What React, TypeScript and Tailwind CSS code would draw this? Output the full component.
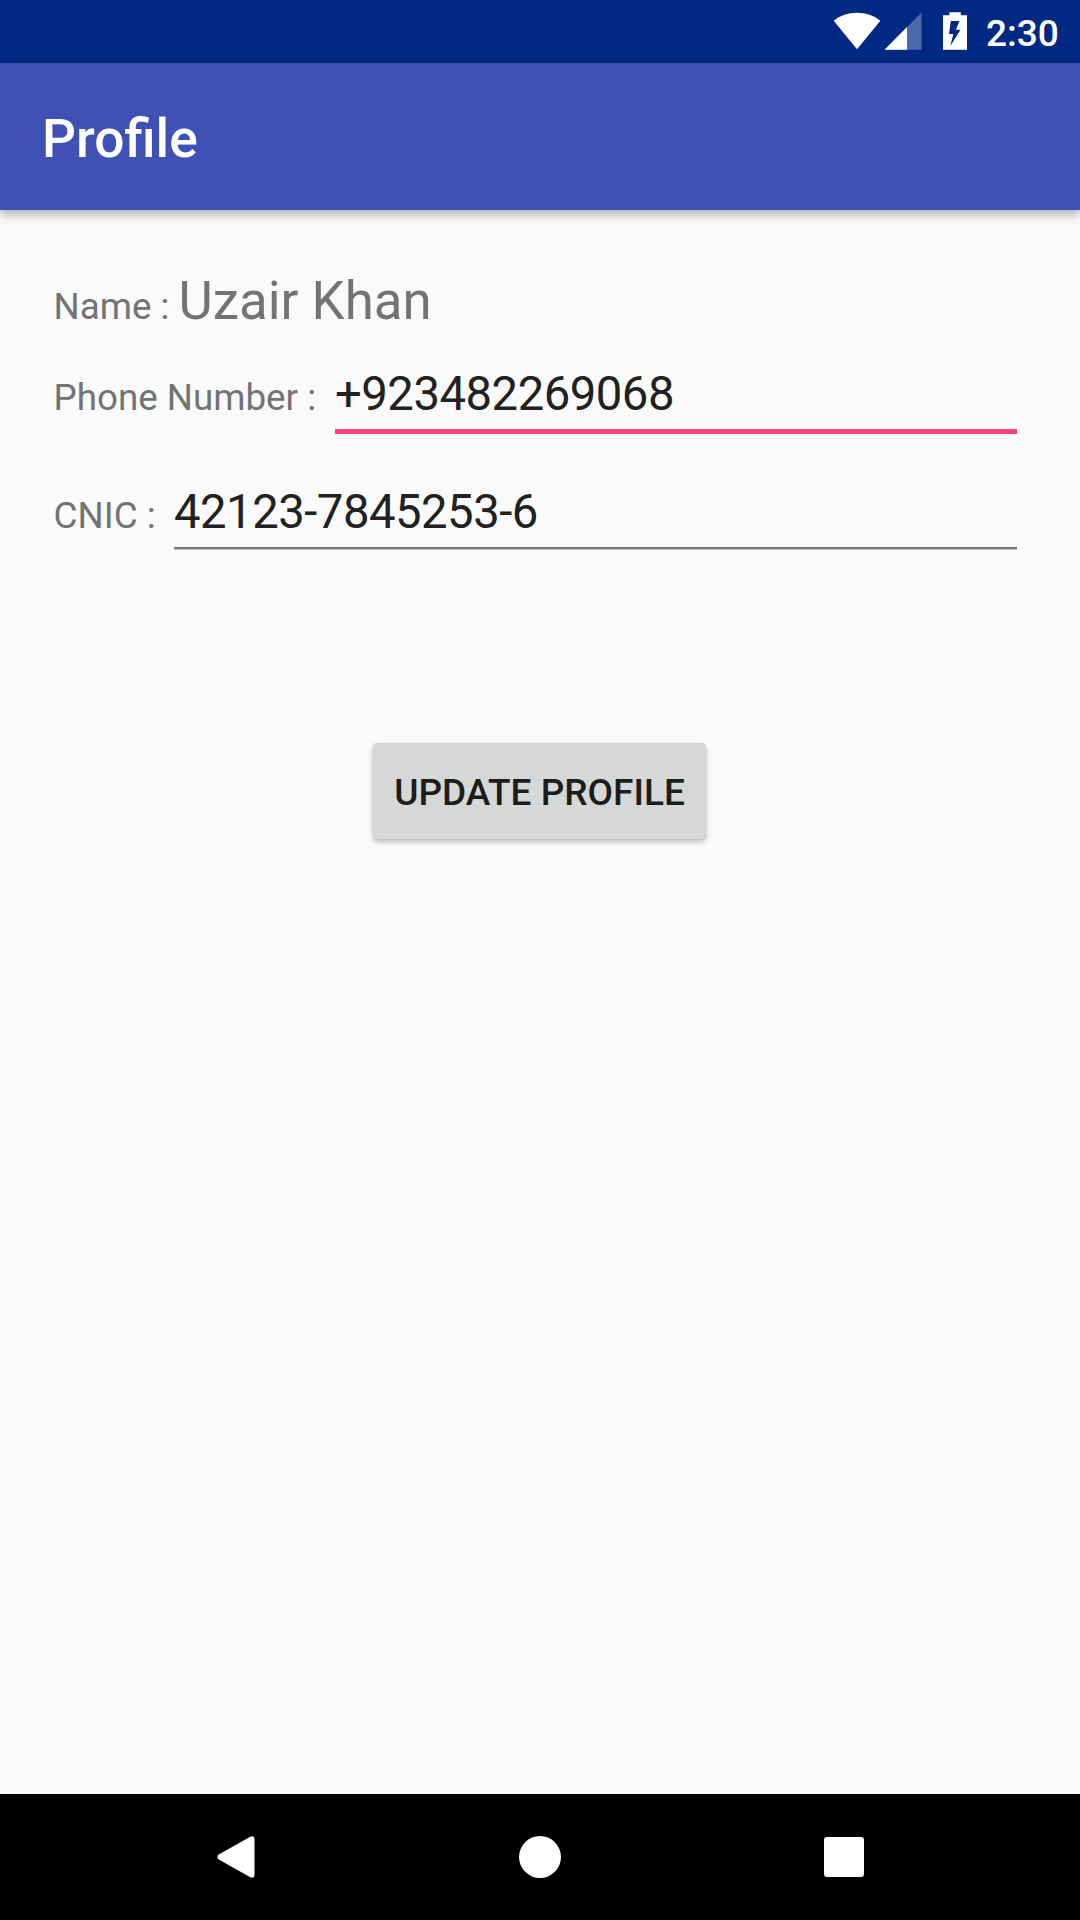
function StatusBar() {
  return (
    <div className="flex h-[63px] items-start bg-[#002984] pl-[833px] text-white">
      <svg width="150" height="63" viewBox="833 0 150 63" className="shrink-0" fill="currentColor">
        <path d="M833.7 20.7C840 15.600 848 12.700 857 12.700S874 15.600 880.3 20.700L857 49.300Z" />
        <path d="M921.500 12.600V49.700H884.500Z" opacity=".3" />
        <path d="M907 27.100V49.700H884.500Z" />
        <path
          fillRule="evenodd"
          d="M949.300 12.300H960.800V15.300H967V49.700H943V15.300H949.300ZM950.800 20.900L949 34H953.400L950.300 46L960.500 29.700H956L959.400 20.900Z"
        />
      </svg>
      <span className="mt-[15px] ml-[3px] text-[37px] leading-[37px] font-medium">2:30</span>
    </div>
  );
}

function NavigationBar() {
  return (
    <nav className="flex h-[126px] items-center bg-black pl-[217px] text-white">
      <button aria-label="Back" className="mr-[264px] shrink-0">
        <svg width="38" height="42" viewBox="0 0 38 42" className="block" fill="currentColor">
          <path d="M1.300 18.800L33.300.8Q37.500-.8 37.500 3V39Q37.500 42.800 33.300 41.200L1.300 23.200Q-.4 21 1.300 18.800Z" />
        </svg>
      </button>
      <button aria-label="Home" className="size-[42px] shrink-0 rounded-full bg-white" />
      <button aria-label="Recents" className="ml-[263px] size-10 shrink-0 rounded-[3px] bg-white" />
    </nav>
  );
}

export default function App() {
  return (
    <div className="flex h-[1920px] w-[1080px] flex-col overflow-hidden bg-[#fafafa] font-['Roboto',sans-serif] text-[36.750px] leading-[37px] text-[#737373]">
      <StatusBar />
      <header className="flex h-[147px] items-center bg-[#3f51b5] pt-[4px] pl-[42px] text-white shadow-[0_4px_10px_rgba(0,0,0,0.32)]">
        <h1 className="text-[53.300px] leading-[62px] font-medium">Profile</h1>
      </header>
      <main className="flex flex-1 flex-col pr-[63px] pl-[53.500px] whitespace-pre">
        <div className="mt-[65px] flex h-[81px] items-baseline">
          <span>Name : </span>
          <span className="text-[52.800px] leading-[53px]">Uzair Khan</span>
        </div>
        <div className="flex h-[79px] items-baseline">
          <span className="w-[281.500px] shrink-0">Phone Number : </span>
          <span className="h-[78px] flex-1 border-b-[5px] border-[#ff4081] pt-[15px] text-[47.250px] leading-[47px] tracking-[-0.5px] text-[#212121]">
            +923482269068
          </span>
        </div>
        <div className="mt-[39px] flex h-[79px] items-baseline">
          <span className="w-[120.500px] shrink-0">CNIC : </span>
          <span className="h-[75px] flex-1 border-b-2 border-[#737373] pt-[15px] text-[47.250px] leading-[47px] tracking-[-0.5px] text-[#212121] shadow-[0_1px_0_#c4c4c4]">
            42123-7845253-6
          </span>
        </div>
        <button className="mt-[190px] ml-[319.500px] h-[96px] w-[333px] rounded-[5px] bg-[#d6d7d7] pt-[2px] text-[37px] leading-[43px] font-medium text-[#1d1d1d] shadow-[0_0_1px_rgba(0,0,0,0.2),0_3px_5px_rgba(0,0,0,0.25)]">
          UPDATE PROFILE
        </button>
      </main>
      <NavigationBar />
    </div>
  );
}
